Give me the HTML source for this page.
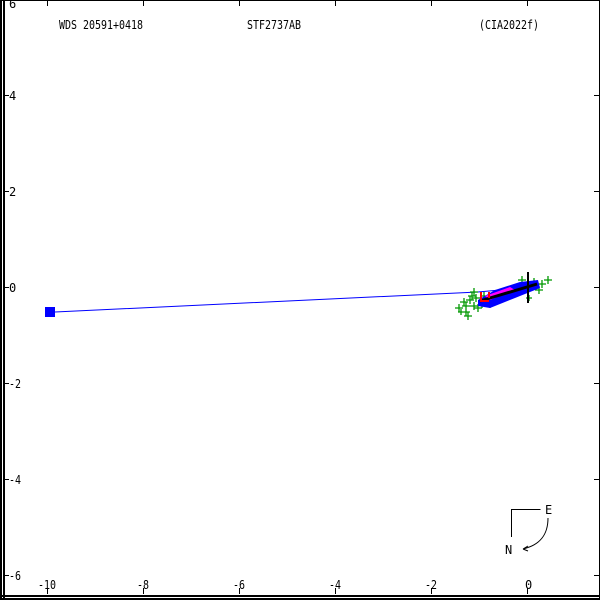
<!DOCTYPE html>
<html><head><style>body{margin:0;background:#fff}svg{display:block}text{font-family:"DejaVu Sans Mono","Liberation Mono",monospace;font-size:12px;fill:#000}</style></head><body>
<svg width="600" height="600" viewBox="0 0 600 600" xmlns="http://www.w3.org/2000/svg">
<g stroke="#000" stroke-width="1" fill="none" shape-rendering="crispEdges">
<line x1="0" y1="0.5" x2="600" y2="0.5"/>
<line x1="599.5" y1="0" x2="599.5" y2="600"/>
<line x1="1" y1="0" x2="1" y2="600" stroke-width="2"/>
<line x1="4" y1="0" x2="4" y2="600" stroke-width="2"/>
<line x1="0" y1="596" x2="600" y2="596" stroke-width="2"/>
<line x1="0" y1="599" x2="600" y2="599" stroke-width="2"/>
<path d="M47.5 0v6M143.5 0v6M239.5 0v6M335.5 0v6M431.5 0v6M527.5 0v6M47.5 594v-6M143.5 594v-6M239.5 594v-6M335.5 594v-6M431.5 594v-6M527.5 594v-6M4 95.5h5M4 191.5h5M4 287.5h5M4 383.5h5M4 479.5h5M4 575.5h5M594 95.5h6M594 191.5h6M594 287.5h6M594 383.5h6M594 479.5h6M594 575.5h6"/>
<path d="M511.5 537v-27.5h29"/>
</g>
<path d="M548 518 C548 535 540 545 523 549 M523 549l5-3M523 549l5 2" stroke="#000" fill="none"/>
<text x="59" y="29" textLength="84" lengthAdjust="spacingAndGlyphs">WDS 20591+0418</text>
<text x="247" y="29" textLength="54" lengthAdjust="spacingAndGlyphs">STF2737AB</text>
<text x="479" y="29" textLength="60" lengthAdjust="spacingAndGlyphs">(CIA2022f)</text>
<text x="9" y="8">6</text><text x="9" y="100">4</text><text x="9" y="196">2</text><text x="9" y="292">0</text><text x="9" y="388" textLength="12" lengthAdjust="spacingAndGlyphs">-2</text><text x="9" y="484" textLength="12" lengthAdjust="spacingAndGlyphs">-4</text><text x="9" y="580" textLength="12" lengthAdjust="spacingAndGlyphs">-6</text>
<text x="38" y="589" textLength="18" lengthAdjust="spacingAndGlyphs">-10</text><text x="137" y="589" textLength="12" lengthAdjust="spacingAndGlyphs">-8</text><text x="233" y="589" textLength="12" lengthAdjust="spacingAndGlyphs">-6</text><text x="329" y="589" textLength="12" lengthAdjust="spacingAndGlyphs">-4</text><text x="425" y="589" textLength="12" lengthAdjust="spacingAndGlyphs">-2</text><text x="525" y="589">0</text>
<text x="545" y="514">E</text><text x="505" y="554">N</text>
<rect x="45" y="307" width="10" height="10" fill="#0000ff"/>
<polyline points="55,312 478,292 500,290" stroke="#0000ff" fill="none"/>
<g stroke="#009900" fill="none" stroke-width="1.3">
<path d="M455 308h8M459 304v8M462 312h8M466 308v8M466 300h8M470 296v8M470 306h8M474 302v8M464 316h8M468 312v8M472 298h8M476 294v8M478 304h8M482 300v8M480 296h8M484 292v8M530 282h8M534 278v8M538 284h8M542 280v8M544 280h8M548 276v8M518 280h8M522 276v8M470 292h8M474 288v8M460 302h8M464 298v8M535 290h8M539 286v8M526 298h6M529 295v6M468 296h8M472 292v8M474 308h8M478 304v8M462 306h8M466 302v8M486 304h8M490 300v8M458 312h6M461 309v6"/>
</g>
<polygon points="478,300 495,290 520,282 538,280 540,288 515,298 490,308 478,306" fill="#0000ff"/>
<polygon points="485,296 510,287 515,290 490,300" fill="#ff00ff"/>
<line x1="480" y1="301" x2="537" y2="284" stroke="#000" stroke-width="3"/>
<path d="M481 292v9h8M489 292v6" stroke="#ff0000" stroke-width="2" fill="none"/>
<line x1="528" y1="272" x2="528" y2="303" stroke="#000" stroke-width="2"/>
</svg>
</body></html>
